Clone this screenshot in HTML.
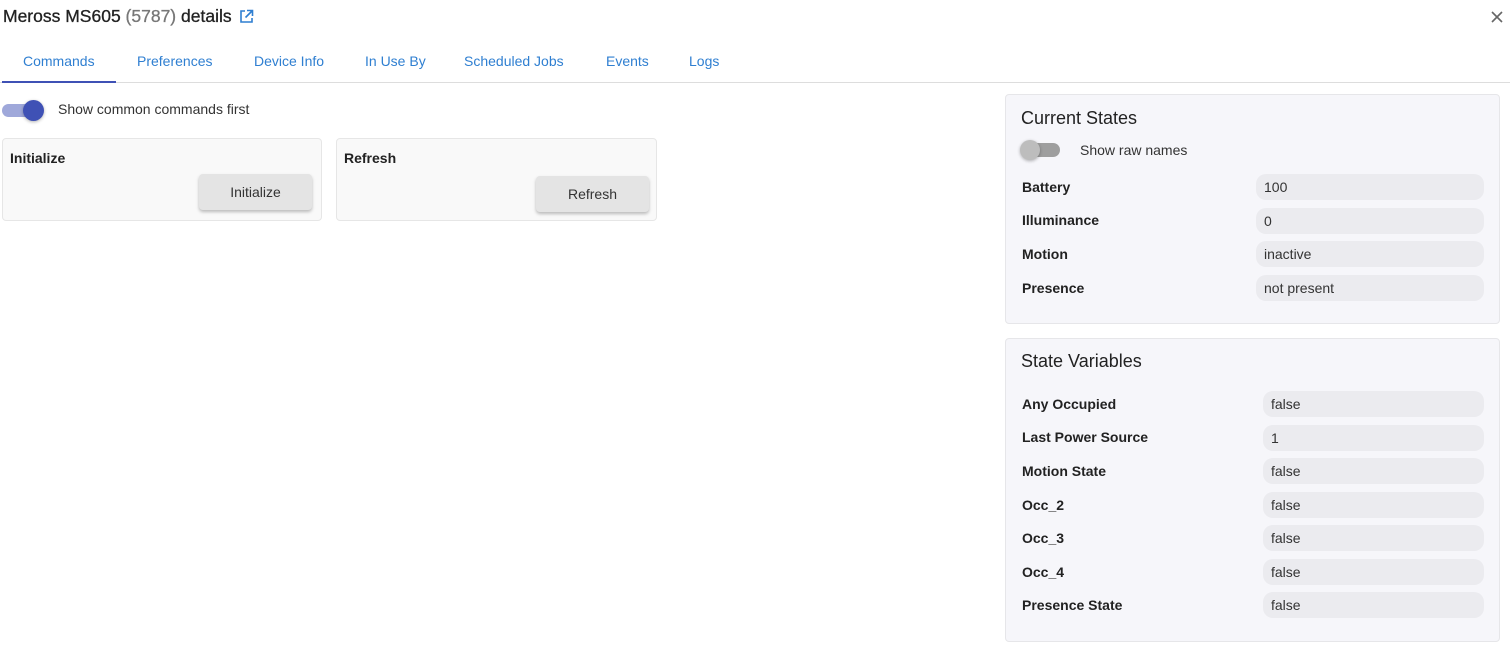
<!DOCTYPE html>
<html><head><meta charset="utf-8"><style>
*{box-sizing:border-box;margin:0;padding:0}
body{width:1510px;height:655px;background:#fff;font-family:"Liberation Sans",sans-serif;color:#222;position:relative;overflow:hidden}
.a{position:absolute;white-space:nowrap}
.tab{position:absolute;top:53px;font-size:14px;color:#2f7fd1}
.card{position:absolute;background:#f9f9f9;border:1px solid #e6e6e6;border-radius:4px}
.btn{position:absolute;background:#e4e4e4;border-radius:4px;box-shadow:0 2px 3px rgba(0,0,0,.25);font-size:14px;color:#333;text-align:center;line-height:36px;width:113px;height:36px}
.panel{position:absolute;left:1005px;width:495px;background:#f6f6fa;border:1px solid #e6e6e9;border-radius:4px}
.lbl{position:absolute;left:16px;font-size:14px;font-weight:bold;color:#222}
.pill{position:absolute;right:15px;height:26px;background:#ebebef;border-radius:10px;font-size:14px;line-height:26px;padding-left:8px;color:#333}
</style></head><body>
<div class="a" style="left:3px;top:6px;font-size:17.5px;color:#222;-webkit-text-stroke:0.3px #222">Meross MS605 <span style="color:#777;-webkit-text-stroke:0.3px #777">(5787)</span> details</div>
<svg class="a" style="left:239px;top:9px" width="15" height="15" viewBox="0 0 15 15" fill="none" stroke="#2f7fd1" stroke-width="1.6"><path d="M6 2H2v11h11V9"/><path d="M8 1.5h5.5V7M13.5 1.5L6.5 8.5"/></svg>
<svg class="a" style="left:1491px;top:11px" width="12" height="12" viewBox="0 0 12 12" stroke="#666" stroke-width="1.6"><path d="M1 1L11 11M11 1L1 11"/></svg>
<div class="tab" style="left:23px">Commands</div>
<div class="tab" style="left:137px">Preferences</div>
<div class="tab" style="left:254px">Device Info</div>
<div class="tab" style="left:365px">In Use By</div>
<div class="tab" style="left:464px">Scheduled Jobs</div>
<div class="tab" style="left:606px">Events</div>
<div class="tab" style="left:689px">Logs</div>
<div class="a" style="left:0;top:82px;width:1510px;height:1px;background:#ddd"></div>
<div class="a" style="left:2px;top:81px;width:114px;height:2px;background:#3f51b5"></div>
<div class="a" style="left:2px;top:104px;width:40px;height:13px;border-radius:7px;background:#9fa8da"></div>
<div class="a" style="left:23px;top:100px;width:21px;height:21px;border-radius:50%;background:#3f51b5;box-shadow:0 1px 3px rgba(0,0,0,.3)"></div>
<div class="a" style="left:58px;top:101px;font-size:14px;color:#333">Show common commands first</div>
<div class="card" style="left:2px;top:138px;width:320px;height:83px"><div class="a" style="left:7px;top:11px;font-size:14px;font-weight:bold">Initialize</div><div class="btn" style="left:196px;top:35px">Initialize</div></div>
<div class="card" style="left:336px;top:138px;width:321px;height:83px"><div class="a" style="left:7px;top:11px;font-size:14px;font-weight:bold">Refresh</div><div class="btn" style="left:199px;top:37px">Refresh</div></div>
<div class="panel" style="top:94px;height:230px">
<div class="a" style="left:15px;top:13px;font-size:18px;color:#222">Current States</div>
<div class="a" style="left:15px;top:48px;width:39px;height:14px;border-radius:7px;background:#9e9e9e"></div>
<div class="a" style="left:14px;top:45px;width:20px;height:20px;border-radius:50%;background:#bdbdbd;box-shadow:0 1px 3px rgba(0,0,0,.3)"></div>
<div class="a" style="left:74px;top:47px;font-size:14px;color:#333">Show raw names</div>
<div class="lbl" style="top:84px">Battery</div><div class="pill" style="top:79px;left:250px">100</div>
<div class="lbl" style="top:117px">Illuminance</div><div class="pill" style="top:113px;left:250px">0</div>
<div class="lbl" style="top:151px">Motion</div><div class="pill" style="top:146px;left:250px">inactive</div>
<div class="lbl" style="top:185px">Presence</div><div class="pill" style="top:180px;left:250px">not present</div>
</div>
<div class="panel" style="top:338px;height:304px">
<div class="a" style="left:15px;top:12px;font-size:18px;color:#222">State Variables</div>
<div class="lbl" style="top:57px">Any Occupied</div><div class="pill" style="top:52px;left:257px">false</div>
<div class="lbl" style="top:90px">Last Power Source</div><div class="pill" style="top:86px;left:257px">1</div>
<div class="lbl" style="top:124px">Motion State</div><div class="pill" style="top:119px;left:257px">false</div>
<div class="lbl" style="top:158px">Occ_2</div><div class="pill" style="top:153px;left:257px">false</div>
<div class="lbl" style="top:191px">Occ_3</div><div class="pill" style="top:186px;left:257px">false</div>
<div class="lbl" style="top:225px">Occ_4</div><div class="pill" style="top:220px;left:257px">false</div>
<div class="lbl" style="top:258px">Presence State</div><div class="pill" style="top:253px;left:257px">false</div>
</div>
</body></html>
